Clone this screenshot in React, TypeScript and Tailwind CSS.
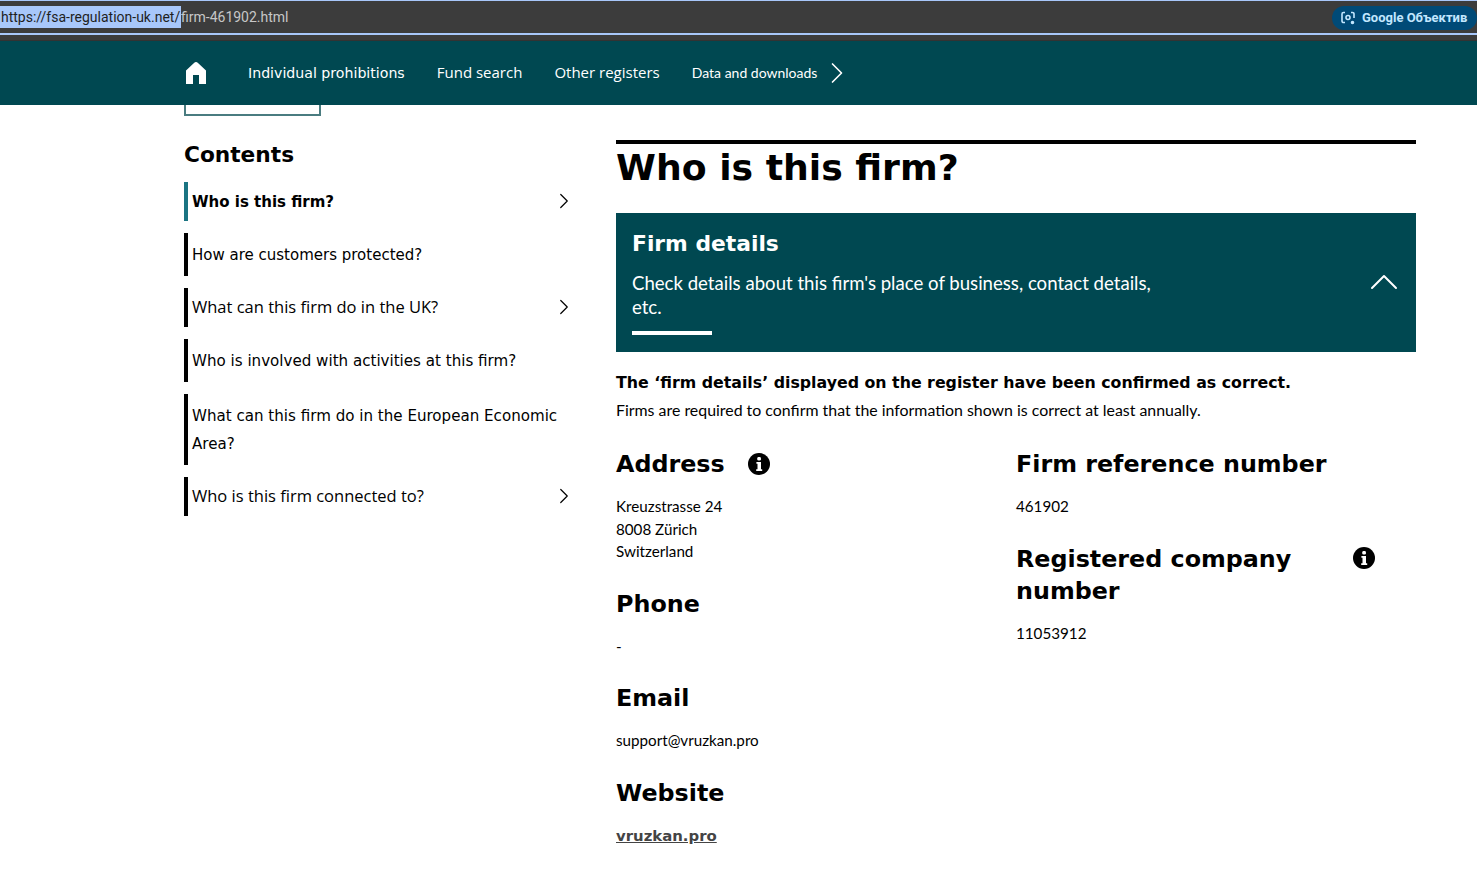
import { ChevronRight, ChevronUp } from 'lucide-react'

const dejavu = "font-['DejaVu_Sans',sans-serif]"

const contents = [
  { label: 'Who is this firm?', h: 'h-[39px]', arrow: true, active: true, font: "font-['DejaVu_Sans',sans-serif] text-[15px] font-bold mt-[2px]" },
  { label: 'How are customers protected?', h: 'h-[43px]', font: "font-['DejaVu_Sans',sans-serif] text-[15px] mt-[2px]" },
  { label: 'What can this firm do in the UK?', h: 'h-[39px]', arrow: true, font: "font-['Open_Sans',sans-serif] text-[16.5px] -mt-[1px]" },
  { label: 'Who is involved with activities at this firm?', h: 'h-[43px]', font: "font-['DejaVu_Sans',sans-serif] text-[15.1px] mt-[2px]" },
  { label: 'What can this firm do in the European Economic Area?', h: 'h-[71px]', font: "font-['DejaVu_Sans',sans-serif] text-[15.1px] leading-[28px]" },
  { label: 'Who is this firm connected to?', h: 'h-[39px]', arrow: true, font: "font-['Open_Sans',sans-serif] text-[16.5px] -mt-[1px]" },
]

function InfoIcon() {
  return (
    <svg viewBox="0 0 22 22" className="size-[22px] shrink-0">
      <circle cx="11" cy="11" r="11" fill="#000" />
      <rect x="9.3" y="4" width="3.6" height="3.4" rx="1.2" fill="#fff" />
      <path d="M8.4 9h4.6v7.2h1.2V18H8.2v-1.8h1.3v-5.4H8.4z" fill="#fff" />
    </svg>
  )
}

function BrowserBar() {
  return (
    <div className="h-[41px] bg-[#3c3c3c] border-b border-[#333]">
      <div className="h-[35px] border-y-2 border-t-[1px] border-[#a8c7fa] flex items-center justify-between">
        <div className="flex items-center text-[14px] font-['Roboto',sans-serif]">
          <span className="bg-[#a8c7fa] text-[#1f1f1f] h-[22px] leading-[22px] pl-px w-[181px]">https://fsa-regulation-uk.net/</span>
          <span className="text-[#c7c7c7]">firm-461902.html</span>
        </div>
        <div className="h-[24px] w-[145px] mt-px rounded-full bg-[#004a77] text-[#c2e7ff] flex items-center pl-[8px] gap-[6px] text-[13px] font-bold font-['Roboto',sans-serif]">
          <svg viewBox="0 0 16 16" className="size-[16px]" fill="none" stroke="#c2e7ff" strokeWidth="1.6">
            <path d="M5 2.5H3.5a1.5 1.5 0 0 0-1.5 1.5v7a1.5 1.5 0 0 0 1.5 1.5H5M11 2.5h1.5A1.5 1.5 0 0 1 14 4v4" />
            <circle cx="8" cy="7.5" r="2" />
            <circle cx="12.5" cy="12.5" r="1" fill="#c2e7ff" />
          </svg>
          <span>Google Объектив</span>
        </div>
      </div>
    </div>
  )
}

function Nav() {
  return (
    <nav className="h-[64px] bg-[#004851] pl-[186px] flex items-center text-white">
      <svg viewBox="0 0 20 22" className="h-[22px] w-[20px] mr-[42px]" fill="#fff">
        <path d="M10 0 Q11 0 12 1 L20 8.5 V22 H13 V13 H7 V22 H0 V8.5 L8 1 Q9 0 10 0 Z" />
      </svg>
      <a className={`${dejavu} text-[14.15px] mr-[32px] mt-[2px]`}>Individual prohibitions</a>
      <a className="font-['Open_Sans',sans-serif] text-[15px] mr-[32px] mb-[2px]">Fund search</a>
      <a className="font-['Open_Sans',sans-serif] text-[15px] mr-[32px] mb-[2px]">Other registers</a>
      <a className="font-['Lato',sans-serif] text-[14px] mb-[2px]">Data and downloads</a>
      <ChevronRight className="size-[36px] ml-[2px]" strokeWidth={1.1} />
    </nav>
  )
}

function Sidebar() {
  return (
    <aside className="w-[386px] shrink-0">
      <div className="h-[11px] w-[137px] border-x-2 border-b-2 border-[#4a7c80]" />
      <h2 className={`${dejavu} mt-[24px] text-[21.7px] leading-[30px] font-bold text-black`}>Contents</h2>
      <ul className="mt-[12px] flex flex-col gap-[12px]">
        {contents.map((item) => (
          <li
            key={item.label}
            className={`${item.h} border-l-4 ${item.active ? 'border-[#1a7482]' : 'border-black'} pl-1 flex items-center text-black`}
          >
            <span className={`${item.font} flex-1`}>{item.label}</span>
            {item.arrow && <ChevronRight className="size-[26px] -mr-[7px] -mt-[1px] shrink-0" strokeWidth={1.1} />}
          </li>
        ))}
      </ul>
    </aside>
  )
}

function Field({ title, info, children }: { title: string; info?: boolean; children: React.ReactNode }) {
  return (
    <section>
      <div className="flex items-start">
        <h3 className={`${dejavu} text-[23.8px] leading-[32px] font-bold text-black w-fit`}>{title}</h3>
        {info && <div className="ml-[23px] mt-[5px]"><InfoIcon /></div>}
      </div>
      <div className="mt-[15px] mb-px font-['Lato',sans-serif] text-[15.2px] leading-[22.5px] text-black">{children}</div>
    </section>
  )
}

export default function App() {
  return (
    <div className="w-[1477px] h-[875px] overflow-hidden bg-white">
      <BrowserBar />
      <Nav />
      <div className="flex pl-[184px] gap-[46px]">
        <Sidebar />
        <main className="w-[800px] pt-[35px]">
          <div className="h-[4px] bg-black" />
          <h1 className={`${dejavu} mt-[1px] text-[36.2px] leading-[46px] font-bold text-black`}>Who is this firm?</h1>
          <div className="mt-[22px] h-[139px] bg-[#004851] pl-[16px] pr-[20px] pt-[15px] text-white relative">
            <h2 className={`${dejavu} text-[21.8px] leading-[32px] font-bold`}>Firm details</h2>
            <p className="mt-[11px] w-[530px] font-['Lato',sans-serif] text-[18.6px] leading-[24px]">
              Check details about this firm's place of business, contact details, etc.
            </p>
            <div className="mt-[12px] h-[4px] w-[80px] bg-white" />
            <ChevronUp className="absolute right-[8px] top-[45px] size-[48px]" strokeWidth={1} />
          </div>
          <p className={`${dejavu} mt-[19px] text-[15.8px] leading-[24px] font-bold text-black`}>
            The ‘firm details’ displayed on the register have been confirmed as correct.
          </p>
          <p className="mt-[3px] font-['Lato',sans-serif] text-[15.9px] leading-[24px] text-black">
            Firms are required to confirm that the information shown is correct at least annually.
          </p>
          <div className="mt-[26px] grid grid-cols-2">
            <div className="flex flex-col gap-[24px]">
              <Field title="Address" info>
                <p>Kreuzstrasse 24</p>
                <p>8008 Zürich</p>
                <p>Switzerland</p>
              </Field>
              <Field title="Phone">-</Field>
              <Field title="Email">support@vruzkan.pro</Field>
              <Field title="Website">
                <a className={`${dejavu} text-[14.9px] font-bold text-[#444] underline`}>vruzkan.pro</a>
              </Field>
            </div>
            <div className="flex flex-col gap-[24px]">
              <Field title="Firm reference number">461902</Field>
              <section>
                <div className="flex items-start">
                  <h3 className={`${dejavu} w-[337px] text-[23.8px] leading-[32px] font-bold text-black`}>Registered company number</h3>
                  <div className="mt-[4px]"><InfoIcon /></div>
                </div>
                <div className="mt-[15px] font-['Lato',sans-serif] text-[15.2px] leading-[22.5px] text-black">11053912</div>
              </section>
            </div>
          </div>
        </main>
      </div>
    </div>
  )
}
